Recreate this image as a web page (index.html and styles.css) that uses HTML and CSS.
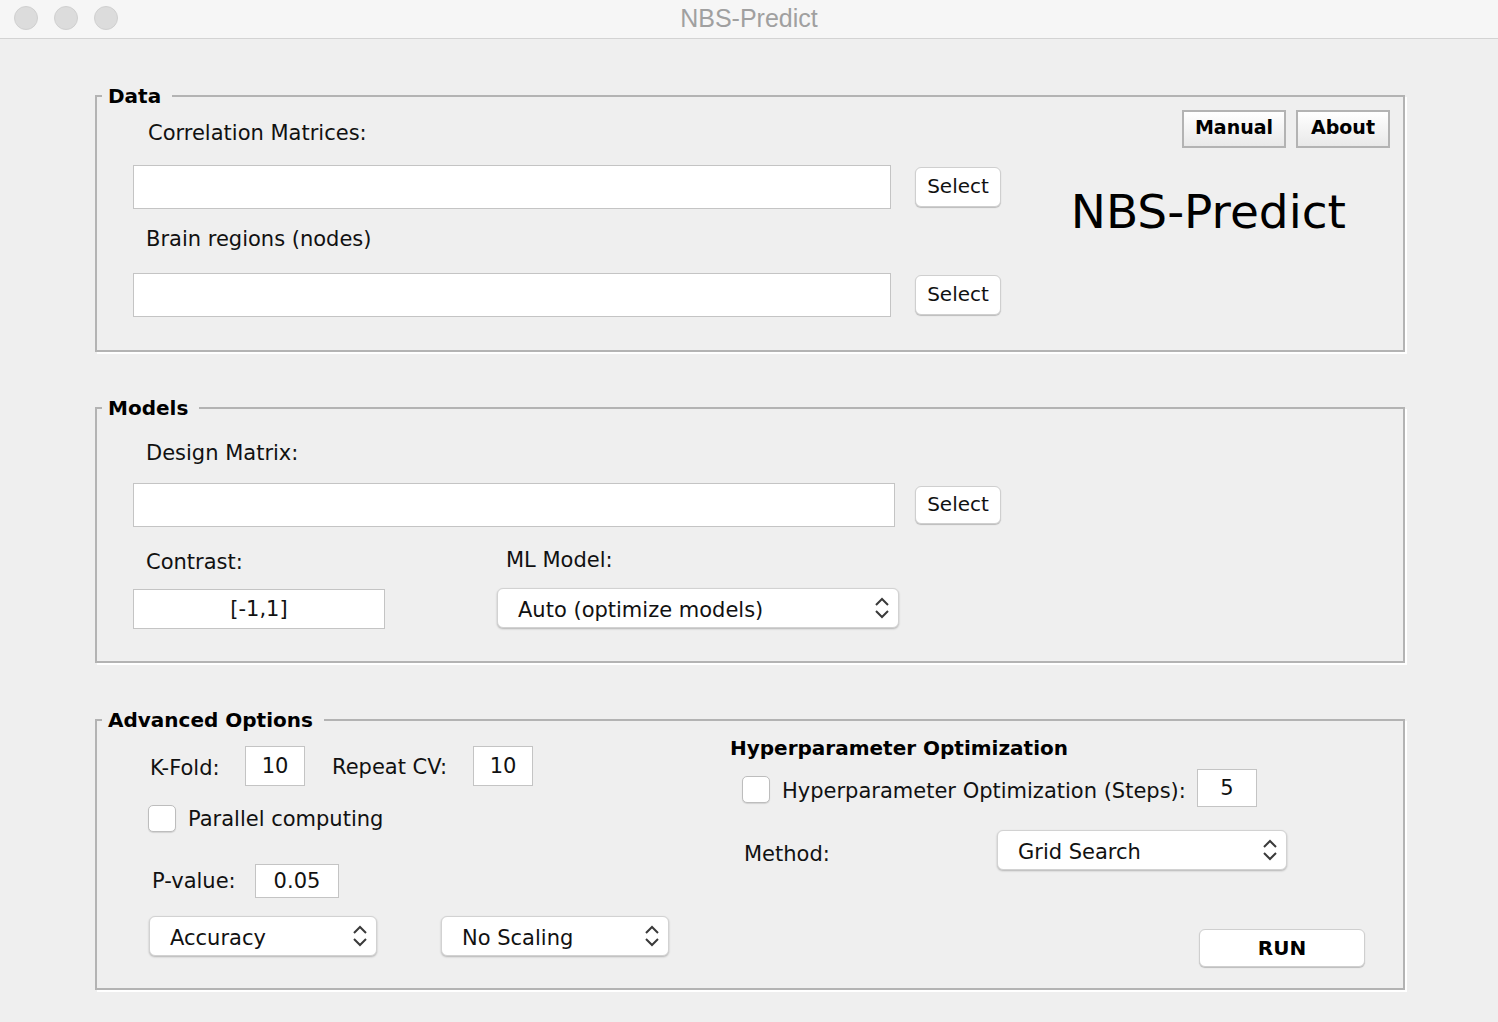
FILE: index.html
```html
<!DOCTYPE html>
<html>
<head>
<meta charset="utf-8">
<title>NBS-Predict</title>
<link rel="stylesheet" href="styles.css">
</head>
<body>
<div class="window">
  <header class="titlebar">
    <div class="lights">
      <span class="light"></span><span class="light"></span><span class="light"></span>
    </div>
    <div class="wtitle">NBS-Predict</div>
    <div></div>
  </header>

  <main class="main">
    <fieldset class="panel">
      <legend class="legend">Data</legend>
      <div class="data-body">
        <div class="data-left">
          <div class="label lbl-corr">Correlation Matrices:</div>
          <div class="file-row fr1">
            <div class="field field-wide"></div>
            <button class="sel-btn">Select</button>
          </div>
          <div class="label lbl-brain">Brain regions (nodes)</div>
          <div class="file-row fr2">
            <div class="field field-wide"></div>
            <button class="sel-btn">Select</button>
          </div>
        </div>
        <div class="data-right">
          <div class="top-btns">
            <button class="sq-btn btn-manual">Manual</button>
            <button class="sq-btn btn-about">About</button>
          </div>
          <div class="big-title">NBS-Predict</div>
        </div>
      </div>
    </fieldset>

    <fieldset class="panel panel-models">
      <legend class="legend">Models</legend>
      <div class="models-body">
        <div class="label lbl-design">Design Matrix:</div>
        <div class="file-row fr3">
          <div class="field field-design"></div>
          <button class="sel-btn">Select</button>
        </div>
        <div class="model-row">
          <div class="col-contrast">
            <div class="label lbl-contrast">Contrast:</div>
            <div class="field field-contrast">[-1,1]</div>
          </div>
          <div class="col-ml">
            <div class="label lbl-ml">ML Model:</div>
            <div class="dropdown dd-ml"><span class="dd-text">Auto (optimize models)</span>
              <svg class="chev" width="16" height="26" viewBox="0 0 16 26"><polyline points="2,10 8,4 14,10" fill="none" stroke="#3a3a3a" stroke-width="2"/><polyline points="2,16 8,22 14,16" fill="none" stroke="#3a3a3a" stroke-width="2"/></svg>
            </div>
          </div>
        </div>
      </div>
    </fieldset>

    <fieldset class="panel panel-adv">
      <legend class="legend">Advanced Options</legend>
      <div class="adv-body">
        <div class="adv-left">
          <div class="row row-kfold">
            <span class="label w-kfold">K-Fold:</span>
            <div class="field field-num">10</div>
            <span class="label w-repeat">Repeat CV:</span>
            <div class="field field-num">10</div>
          </div>
          <div class="row row-par">
            <span class="checkbox"></span>
            <span class="label">Parallel computing</span>
          </div>
          <div class="row row-p">
            <span class="label w-p">P-value:</span>
            <div class="field field-p">0.05</div>
          </div>
          <div class="row row-dd">
            <div class="dropdown dd-small"><span class="dd-text">Accuracy</span>
              <svg class="chev" width="16" height="26" viewBox="0 0 16 26"><polyline points="2,10 8,4 14,10" fill="none" stroke="#3a3a3a" stroke-width="2"/><polyline points="2,16 8,22 14,16" fill="none" stroke="#3a3a3a" stroke-width="2"/></svg>
            </div>
            <div class="dropdown dd-small dd-scale"><span class="dd-text">No Scaling</span>
              <svg class="chev" width="16" height="26" viewBox="0 0 16 26"><polyline points="2,10 8,4 14,10" fill="none" stroke="#3a3a3a" stroke-width="2"/><polyline points="2,16 8,22 14,16" fill="none" stroke="#3a3a3a" stroke-width="2"/></svg>
            </div>
          </div>
        </div>
        <div class="adv-right">
          <div class="hp-title">Hyperparameter Optimization</div>
          <div class="row row-hp">
            <span class="checkbox"></span>
            <span class="label hp-text">Hyperparameter Optimization (Steps):</span>
            <div class="field field-num field-steps">5</div>
          </div>
          <div class="row row-method">
            <span class="label w-method">Method:</span>
            <div class="dropdown dd-method"><span class="dd-text">Grid Search</span>
              <svg class="chev" width="16" height="26" viewBox="0 0 16 26"><polyline points="2,10 8,4 14,10" fill="none" stroke="#3a3a3a" stroke-width="2"/><polyline points="2,16 8,22 14,16" fill="none" stroke="#3a3a3a" stroke-width="2"/></svg>
            </div>
          </div>
          <div class="row row-run">
            <button class="run-btn">RUN</button>
          </div>
        </div>
      </div>
    </fieldset>
  </main>
</div>
</body>
</html>
```

FILE: styles.css
```css
* { box-sizing: border-box; }
html, body { margin: 0; padding: 0; }
body {
  background: #efefef;
  font-family: "DejaVu Sans", "Liberation Sans", sans-serif;
  color: #111;
  width: 1498px;
  height: 1022px;
  overflow: hidden;
}
.window { width: 1498px; height: 1022px; background: #efefef; }

.titlebar {
  height: 39px;
  background: #f6f6f6;
  border-bottom: 1px solid #d3d3d3;
  display: grid;
  grid-template-columns: 1fr auto 1fr;
  align-items: center;
}
.lights { display: flex; gap: 16px; padding-left: 14px; margin-top: -3px; }
.light {
  width: 24px; height: 24px; border-radius: 50%;
  background: #dcdcdc; border: 1px solid #d0d0d0;
}
.wtitle {
  font-family: "Liberation Sans", "DejaVu Sans", sans-serif;
  font-size: 25px;
  color: #a0a0a0;
  margin-top: -1px;
}

.main { padding: 44px 93px 0 95px; }

.panel {
  margin: 0;
  padding: 0;
  min-width: 0;
  border: 2px solid #b3b3b3;
  box-shadow: 2px 2px 0 #ffffff;
}
.legend {
  font-weight: bold;
  font-size: 20px;
  line-height: 26px;
  padding: 0 11px 0 6px;
  margin-left: 5px;
  color: #000;
}
.label { font-size: 21px; line-height: 24px; color: #111; white-space: nowrap; }

.field {
  background: #fff;
  border: 1px solid #c4c4c4;
  font-size: 21px;
  display: flex; align-items: center; justify-content: center;
  color: #111;
}

.sel-btn {
  font-family: inherit;
  font-size: 20px;
  width: 86px; height: 40px;
  background: #fff;
  border: 1px solid #cfcfcf;
  border-radius: 6px;
  box-shadow: 0 1px 1px rgba(0,0,0,0.22);
  color: #111;
  padding: 0 0 2px 0;
}

/* Data */
.data-body { display: flex; padding: 0 13px 33px 36px; }
.data-left { width: 868px; }
.lbl-corr { margin: 12px 0 0 15px; }
.file-row { display: flex; align-items: center; }
.fr1 { margin-top: 20px; }
.field-wide { width: 758px; height: 44px; }
.file-row .sel-btn { margin-left: 24px; }
.lbl-brain { margin: 18px 0 0 13px; }
.fr2 { margin-top: 22px; }

.data-right { flex: 1; display: flex; flex-direction: column; align-items: flex-end; }
.top-btns { display: flex; gap: 10px; margin-top: 1px; }
.sq-btn {
  font-family: inherit;
  font-weight: bold;
  font-size: 19px;
  height: 38px;
  border: 2px solid #b3b3b3;
  background: linear-gradient(#ffffff, #e9e9e9);
  color: #000;
  padding: 0 0 4px 0;
}
.btn-manual { width: 104px; }
.btn-about { width: 94px; }
.big-title {
  font-size: 47px;
  line-height: 56px;
  margin-top: 36px;
  margin-right: 44px;
  color: #000;
}

/* Models */
.panel-models { margin-top: 43px; }
.models-body { padding: 0 0 32px 36px; }
.lbl-design { margin: 20px 0 0 13px; }
.fr3 { margin-top: 18px; }
.field-design { width: 762px; height: 44px; }
.fr3 .sel-btn { margin-left: 20px; height: 38px; }
.model-row { display: flex; align-items: flex-start; }
.col-contrast { margin-top: 23px; }
.lbl-contrast { margin-left: 13px; }
.field-contrast { width: 252px; height: 40px; margin-top: 15px; }
.col-ml { margin-left: 112px; margin-top: 21px; }
.lbl-ml { margin-left: 9px; }
.dd-ml { width: 402px; margin-top: 16px; }

.dropdown {
  height: 40px;
  background: #fff;
  border: 1px solid #d2d2d2;
  border-radius: 6px;
  box-shadow: 0 1px 2px rgba(0,0,0,0.25);
  display: flex; align-items: center; justify-content: space-between;
  padding: 0 8px 0 20px;
  font-size: 21px;
  color: #111;
}
.dd-text { padding-top: 4px; }
.chev { display: block; }

/* Advanced */
.panel-adv { margin-top: 44px; }
.adv-body { display: flex; align-items: flex-start; }
.adv-left { width: 633px; padding-left: 52px; padding-bottom: 32px; }
.row { display: flex; align-items: center; }
.row-kfold { margin-top: 12px; height: 41px; }
.w-kfold { width: 95px; margin-left: 1px; padding-top: 4px; }
.field-num { width: 60px; height: 40px; }
.w-repeat { width: 141px; margin-left: 27px; padding-top: 2px; }
.row-par { margin-top: 19px; }
.checkbox {
  width: 28px; height: 27px;
  background: #fff;
  border: 1px solid #bdbdbd;
  border-radius: 5px;
  box-shadow: 0 1px 1px rgba(0,0,0,0.12);
  display: inline-block;
  flex: none;
}
.row-par .checkbox { margin-left: -1px; margin-right: 12px; }
.row-p { margin-top: 32px; }
.w-p { width: 103px; margin-left: 3px; }
.field-p { width: 84px; height: 34px; }
.row-dd { margin-top: 18px; }
.dd-small { width: 228px; }
.dd-scale { margin-left: 64px; }

.adv-right { flex: 1; padding-bottom: 21px; }
.hp-title { font-weight: bold; font-size: 20px; line-height: 24px; margin-top: 3px; color: #000; }
.row-hp { margin-top: 9px; }
.row-hp .checkbox { margin-left: 12px; margin-right: 12px; margin-top: 3px; }
.hp-text { padding-top: 5px; }
.field-steps { height: 38px; margin-left: 11px; }
.row-method { margin-top: 23px; }
.w-method { width: 253px; margin-left: 14px; padding-top: 8px; }
.dd-method { width: 290px; }
.row-run { margin-top: 59px; padding-left: 469px; }
.run-btn {
  font-family: inherit;
  font-weight: bold;
  font-size: 20px;
  width: 166px; height: 38px;
  background: #fff;
  border: 1px solid #cfcfcf;
  border-radius: 6px;
  box-shadow: 0 1px 1px rgba(0,0,0,0.22);
  color: #000;
  padding: 0;
}
```
